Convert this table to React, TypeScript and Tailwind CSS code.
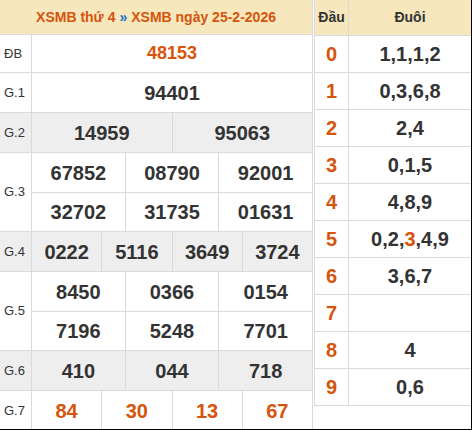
const ORANGE = "text-[#d6540c]";

type Row = { label: string; lines: string[][]; gray?: boolean; orange?: boolean; small?: boolean };

const rows: Row[] = [
  { label: "ĐB", lines: [["48153"]], orange: true, small: true },
  { label: "G.1", lines: [["94401"]] },
  { label: "G.2", lines: [["14959", "95063"]], gray: true },
  { label: "G.3", lines: [["67852", "08790", "92001"], ["32702", "31735", "01631"]] },
  { label: "G.4", lines: [["0222", "5116", "3649", "3724"]], gray: true },
  { label: "G.5", lines: [["8450", "0366", "0154"], ["7196", "5248", "7701"]] },
  { label: "G.6", lines: [["410", "044", "718"]], gray: true },
  { label: "G.7", lines: [["84", "30", "13", "67"]], orange: true },
];

const loto: [string, React.ReactNode][] = [
  ["0", "1,1,1,2"],
  ["1", "0,3,6,8"],
  ["2", "2,4"],
  ["3", "0,1,5"],
  ["4", "4,8,9"],
  ["5", <>0,2,<span className={ORANGE}>3</span>,4,9</>],
  ["6", "3,6,7"],
  ["7", ""],
  ["8", "4"],
  ["9", "0,6"],
];

function PrizeRow({ row }: { row: Row }) {
  return (
    <div className={`flex border-t border-[#dadada] ${row.gray ? "bg-[#eeeeee]" : "bg-white"}`}>
      <div className="w-[32px] shrink-0 border-r border-[#dadada] flex items-center pl-[4px] text-[13px] text-[#333]">
        {row.label}
      </div>
      <div className="flex-1 flex flex-col">
        {row.lines.map((line, i) => (
          <div
            key={i}
            className={`flex ${row.small ? "h-[37px]" : "h-[39px]"} ${i > 0 ? "border-t border-[#dadada]" : ""}`}
          >
            {line.map((n, j) => (
              <div
                key={j}
                className={`flex-1 flex items-center justify-center font-bold ${
                  row.small ? "text-[18px]" : "text-[20px]"
                } ${j > 0 ? "border-l border-[#dadada]" : ""} ${row.orange ? ORANGE : "text-[#333]"}`}
              >
                {n}
              </div>
            ))}
          </div>
        ))}
      </div>
    </div>
  );
}

export default function App() {
  return (
    <div className="w-[472px] h-[430px] overflow-hidden flex bg-white border-r border-b border-black font-['Liberation_Sans',Arial,sans-serif]">
      <div className="w-[313px] shrink-0 border-r border-[#dadada] h-full">
        <div className="h-[34px] bg-[#f7e7bc] flex items-center justify-center text-[14px] font-bold text-[#d6540c]">
          XSMB thứ 4 <span className="mx-[4px] text-[#1f6fc4]">»</span> XSMB ngày 25-2-2026
        </div>
        {rows.map((r) => (
          <PrizeRow key={r.label} row={r} />
        ))}
      </div>
      <div className="ml-[1px] w-[157px] self-start border-l border-[#dadada]">
        <div className="flex h-[36px] bg-[#f7e7bc] border-b border-[#dadada] text-[14px] font-bold text-[#333]">
          <div className="w-[34px] border-r border-[#dadada] flex items-center justify-center">Đầu</div>
          <div className="flex-1 flex items-center justify-center">Đuôi</div>
        </div>
        {loto.map(([head, tail]) => (
          <div key={head} className="flex h-[37px] border-b border-[#dadada] text-[20px] font-bold">
            <div className={`w-[34px] border-r border-[#dadada] flex items-center justify-center ${ORANGE}`}>
              {head}
            </div>
            <div className="flex-1 flex items-center justify-center text-[#333]">{tail}</div>
          </div>
        ))}
      </div>
    </div>
  );
}
